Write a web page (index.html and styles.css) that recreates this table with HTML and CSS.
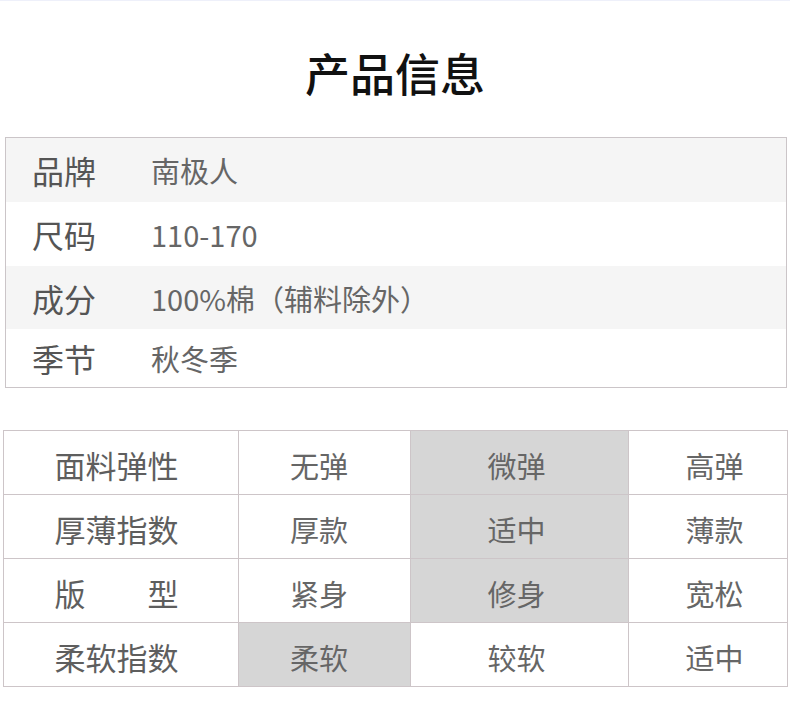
FILE: index.html
```html
<!DOCTYPE html>
<html lang="zh-CN">
<head>
<meta charset="utf-8">
<title>产品信息</title>
<link rel="stylesheet" href="styles.css">
</head>
<body>
<div class="topline"></div>
<h1 class="title">产品信息</h1>
<div class="info">
  <div class="info-row shade"><span class="label">品牌</span><span class="value">南极人</span></div>
  <div class="info-row"><span class="label">尺码</span><span class="value">110-170</span></div>
  <div class="info-row shade"><span class="label">成分</span><span class="value">100%棉（辅料除外）</span></div>
  <div class="info-row last"><span class="label">季节</span><span class="value">秋冬季</span></div>
</div>
<div class="spec">
  <div class="cell head">面料弹性</div>
  <div class="cell c2">无弹</div>
  <div class="cell c3 on">微弹</div>
  <div class="cell c4">高弹</div>
  <div class="cell head">厚薄指数</div>
  <div class="cell c2">厚款</div>
  <div class="cell c3 on">适中</div>
  <div class="cell c4">薄款</div>
  <div class="cell head">版　　型</div>
  <div class="cell c2">紧身</div>
  <div class="cell c3 on">修身</div>
  <div class="cell c4">宽松</div>
  <div class="cell head">柔软指数</div>
  <div class="cell c2 on">柔软</div>
  <div class="cell c3">较软</div>
  <div class="cell c4">适中</div>
</div>
</body>
</html>
```
FILE: styles.css
```css
* { box-sizing: border-box; }
html, body { margin: 0; padding: 0; background: #fff; }
body {
  width: 790px;
  font-family: "Noto Sans CJK SC", "Noto Sans", sans-serif;
  color: #666;
}
.topline { height: 1px; background: #eef0fa; }
.title {
  margin: 0;
  padding-top: 49px;
  height: 136px;
  font-size: 45px;
  line-height: 45px;
  font-weight: 500;
  color: #111;
  text-align: center;
}
.info {
  margin-left: 5px;
  width: 782px;
  border: 1px solid #cbc5c8;
}
.info-row {
  display: flex;
  align-items: center;
  height: 64px;
  padding-left: 26px;
}
.info-row.shade { background: #f5f5f5; }
.info-row.last { height: 58px; }
.info-row:nth-child(3) { height: 63px; }
.label {
  width: 119px;
  font-size: 32px;
  color: #555;
}
.value {
  font-size: 29px;
  color: #666;
}
.spec {
  margin: 42px 0 0 3px;
  width: 785px;
  display: grid;
  grid-template-columns: 234px 171px 217px 158px;
  grid-auto-rows: 63px;
  gap: 1px;
  padding: 1px;
  background: #cdc5c8;
}
.cell {
  background: #fff;
  display: flex;
  align-items: center;
  justify-content: center;
  padding-top: 4px;
  font-size: 29px;
  color: #666;
}
.cell.head { font-size: 31px; color: #5e5e5e; padding-right: 9px; }
.cell.c2 { padding-right: 11px; }
.cell.c3 { padding-right: 6px; }
.cell.c4 { padding-left: 13px; }
.cell.on { background: #d6d6d6; }
```
